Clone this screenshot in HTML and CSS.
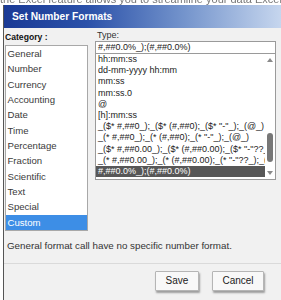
FILE: index.html
```html
<!DOCTYPE html>
<html lang="en">
<head>
    <meta charset="UTF-8">
    <meta name="viewport" content="width=device-width, initial-scale=1.0">
    <title>Set Number Formats</title>
    <link rel="stylesheet" href="styles.css">
</head>
<body>
    <div class="page-strip"><span>the Excel feature allows you to streamline your data Excel like mail templates.</span></div>

    <div class="dialog">
        <div class="titlebar">Set Number Formats</div>

        <div class="dialog-body">
            <div class="category">
                <div class="label label-strong">Category :</div>
                <ul class="category-list">
                    <li>General</li>
                    <li>Number</li>
                    <li>Currency</li>
                    <li>Accounting</li>
                    <li>Date</li>
                    <li>Time</li>
                    <li>Percentage</li>
                    <li>Fraction</li>
                    <li>Scientific</li>
                    <li>Text</li>
                    <li>Special</li>
                    <li class="selected">Custom</li>
                </ul>
            </div>

            <div class="type">
                <div class="label">Type:</div>
                <div class="type-input">#,##0.0%_);(#,##0.0%)</div>
                <div class="type-list">
                    <ul class="type-items">
                        <li>hh:mm:ss</li>
                        <li>dd-mm-yyyy hh:mm</li>
                        <li>mm:ss</li>
                        <li>mm:ss.0</li>
                        <li>@</li>
                        <li>[h]:mm:ss</li>
                        <li>_($* #,##0_);_($* (#,##0);_($* "-"_);_(@_)</li>
                        <li>_(* #,##0_);_(* (#,##0);_(* "-"_);_(@_)</li>
                        <li>_($* #,##0.00_);_($* (#,##0.00);_($* "-"??_);_(@_)</li>
                        <li>_(* #,##0.00_);_(* (#,##0.00);_(* "-"??_);_(@_)</li>
                        <li class="selected">#,##0.0%_);(#,##0.0%)</li>
                    </ul>
                    <div class="scrollbar">
                        <span class="arrow arrow-up"></span>
                        <div class="track"><span class="thumb"></span></div>
                        <span class="arrow arrow-down"></span>
                    </div>
                </div>
            </div>
        </div>

        <p class="description">General format call have no specific number format.</p>

        <div class="footer">
            <button class="btn btn-save">Save</button>
            <button class="btn btn-cancel">Cancel</button>
        </div>
    </div>
</body>
</html>
```

FILE: styles.css
```css
body {
    margin: 0;
    background-color: #fff;
    font-family: 'Liberation Sans', Arial, sans-serif;
    color: #333;
    overflow: hidden;
}
.page-strip {
    height: 5px;
    overflow: hidden;
    white-space: nowrap;
}
.page-strip span {
    display: block;
    margin-top: -6px;
    font-size: 11px;
    line-height: 11px;
    color: #777;
    filter: blur(0.5px);
}
.dialog {
    margin-left: 3px;
    height: 295px;
    border-left: 1px solid #555;
    background-color: #f1f1f1;
}
.titlebar {
    height: 23px;
    line-height: 23px;
    padding-left: 8px;
    font-size: 10.2px;
    font-weight: bold;
    color: #fff;
    background: linear-gradient(to right, #1a3a95 0%, #2b51a9 30%, #7494cc 65%, #c6d6ee 100%);
}
.dialog-body {
    display: grid;
    grid-template-columns: 83px 181px;
    column-gap: 7px;
    padding: 2px 0 0 1px;
}
.label {
    font-size: 9px;
    line-height: 11px;
    padding-left: 2px;
    color: #333;
}
.label-strong {
    line-height: 14px;
    padding-left: 0;
    color: #111;
    font-weight: bold;
    font-size: 8.6px;
}
.category-list {
    margin: 1px 0 0;
    padding: 0;
    list-style: none;
    background-color: #fff;
    border: 1px solid #a8a8a8;
    box-sizing: border-box;
}
.category-list li {
    height: 15.33px;
    line-height: 15.33px;
    padding-left: 1.5px;
    font-size: 9.6px;
    color: #3a3a3a;
}
.category-list .selected {
    background-color: #3d8ee6;
    color: #fff;
}
.type-input {
    height: 13px;
    box-sizing: border-box;
    border: 1px solid #9a9a9a;
    background-color: #fff;
    padding-left: 2px;
    font-size: 9px;
    line-height: 11px;
    color: #222;
}
.type-list {
    display: flex;
    margin-top: -1px;
    height: 125px;
    border: 1px solid #9a9a9a;
    background-color: #fff;
}
.type-items {
    flex: 1;
    margin: 0;
    padding: 0;
    list-style: none;
    overflow: hidden;
}
.type-items li {
    height: 11.2px;
    line-height: 11.2px;
    padding-left: 2px;
    white-space: nowrap;
    font-size: 9px;
    color: #222;
}
.type-items .selected {
    background-color: #575757;
    color: #fff;
}
.scrollbar {
    width: 10px;
    display: flex;
    flex-direction: column;
    align-items: center;
}
.arrow {
    width: 0;
    height: 0;
    border-left: 3px solid transparent;
    border-right: 3px solid transparent;
}
.arrow-up {
    margin-top: 4px;
    border-bottom: 4px solid #8a8a8a;
}
.arrow-down {
    margin-bottom: 4px;
    border-top: 4px solid #8a8a8a;
}
.track {
    flex: 1;
}
.thumb {
    display: block;
    width: 6px;
    height: 29px;
    margin-top: 71px;
    border-radius: 3px;
    background-color: #777;
}
.description {
    margin: 9px 0 0 3px;
    font-size: 9.8px;
    line-height: 12px;
    color: #333;
}
.footer {
    display: flex;
    justify-content: flex-end;
    gap: 13px;
    margin-top: 11px;
    padding: 7px 17px 0 0;
    border-top: 1px solid #dadada;
}
.btn {
    height: 20px;
    padding: 0;
    border: 1px solid #b5b5b5;
    border-radius: 1px;
    background-color: #f8f8f8;
    box-shadow: 1px 2px 2px rgba(0, 0, 0, 0.35);
    font-family: 'Liberation Sans', Arial, sans-serif;
    font-size: 10px;
    color: #222;
}
.btn-save {
    width: 44px;
}
.btn-cancel {
    width: 52px;
}
```
